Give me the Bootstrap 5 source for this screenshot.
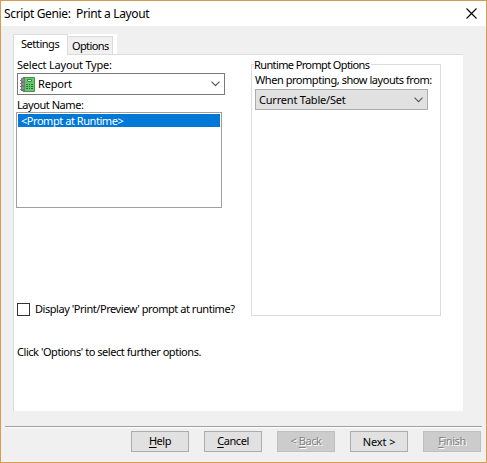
<!DOCTYPE html>
<html lang="en">
<head>
<meta charset="utf-8">
<title>Script Genie: Print a Layout</title>
<link href="https://cdn.jsdelivr.net/npm/bootstrap@5.3.0/dist/css/bootstrap.min.css" rel="stylesheet">
<style>
body{font:11px/16px "Noto Sans","Open Sans",sans-serif;color:#000;letter-spacing:-.45px}
.dialog{width:487px;height:463px;border:1px solid #d79b52;background:#f0f0f0;white-space:nowrap}
.dialog svg{flex:none}
.titlebar{height:25px;background:#fff;padding:0 5px 0 3px}
.caption{font-size:12px;letter-spacing:-.36px;white-space:pre}
.tabs{height:20px;margin:8px 0 0 12px;width:104px;background:#fff}
.tab-item{border:1px solid #dcdcdc}
.tab-on{width:55px;height:21px;background:#fff;border-bottom:0;padding:1px 0 0 7px}
.tab-off{width:45px;height:19px;margin-top:2px;background:#f0f0f0;border-left:0;padding:1px 0 0 4px}
.panel{width:450px;height:357px;margin-left:12px;background:linear-gradient(#dcdcdc,#dcdcdc) 54px 0/395px 1px no-repeat #fff;border-left:1px solid #dcdcdc;padding-left:2px}
.left-side{width:235px;padding-top:3px}
.field-label{padding-left:1px}
.names-label{height:17px;padding-top:2px}
.layout-type{width:208px;height:22px;border:1px solid #7a7a7a;padding:0 4px 0 2px;margin-left:1px}
.layout-type span{padding-left:3px}
.names{width:206px;height:96px;border:1px solid #a0a0a0;padding:1px}
.names .picked{height:13px;line-height:13px;background:#0078d7;color:#fff;padding-left:3px}
.check-row{margin-top:93px;padding-left:1px;gap:5px}
.check-square{width:13px;height:13px;border:1px solid #333;background:#fff;flex:none}
.hint{margin-top:27px}
.prompt-group{width:190px;height:252px;margin:10px 0 0;border:1px solid #dcdcdc;padding:0 0 0 3px}
.group-title{height:8px;margin-left:-1px}
.group-title span{background:#fff;margin-top:-8px;height:16px;padding-right:2px}
.show-from{margin-top:-1px;padding-bottom:1px}
.source{width:173px;height:21px;background:#e1e1e1;border:1px solid #adadad;padding:0 4px 0 3px}
.t-wide{letter-spacing:-.2px}
.t-tight{letter-spacing:-.62px}
.rule{height:2px;margin:15px 4px 0;background:#fff;border-top:1px solid #a0a0a0}
.actions{margin:3px 0 0 130px;gap:15px}
.push{width:58px;height:21px;border:1px solid #adadad;background:#e1e1e1;text-align:center;line-height:18px}
.push.off{background:#ccc;border-color:#bfbfbf;color:#838383;text-shadow:1px 1px #fff}
.push u{text-underline-offset:2px;text-decoration-thickness:1px}
.push-next{line-height:20px;letter-spacing:-.1px}
</style>
<script src="https://cdn.jsdelivr.net/npm/bootstrap@5.3.0/dist/js/bootstrap.bundle.min.js"></script>
</head>
<body class="overflow-hidden">
<main class="dialog">
<header class="titlebar d-flex align-items-center justify-content-between"><span class="caption">Script Genie:  Print a Layout</span><svg class="me-1" width="11" height="11" viewBox="0 0 11 11"><path d="M.5.5l10 10M10.5.5l-10 10" stroke="#000" stroke-width="1.1"/></svg></header>
<nav class="tabs d-flex"><div class="tab-item tab-on">Settings</div><div class="tab-item tab-off t-tight">Options</div></nav>
<section class="panel d-flex">
<div class="left-side">
<div class="field-label t-wide">Select Layout Type:</div>
<div class="layout-type d-flex align-items-center"><svg width="15" height="15" viewBox="0 0 15 15"><path d="M3 .5h11.5v14H3z" fill="#6cc56c" stroke="#3f9a50"/><path d="M1 1h4v13H1z" fill="#777"/><path d="M0 3.5h2M0 6.5h2M0 9.5h2M0 12.5h2" stroke="#777"/><path d="M3 2v2M3 6v2M3 10v2" stroke="#aaa"/><path d="M7.5 2.5h4v2h-4z" fill="#e5ffe5" stroke="#2f9440"/><path d="M6 7.5h2m1 0h1m1 0h2M6 9.5h2m1 0h1m1 0h2M6 11.5h2m1 0h1m1 0h2" stroke="#1b7d32"/></svg><span class="t-wide flex-fill">Report</span><svg width="9" height="6" viewBox="0 0 9 6"><path d="M.5 .7l4 4 4-4" fill="none" stroke="#555" stroke-width="1.1"/></svg></div>
<div class="field-label names-label">Layout Name:</div>
<div class="names"><div class="picked">&lt;Prompt at Runtime&gt;</div></div>
<div class="check-row d-flex align-items-center"><span class="check-square"></span><span>Display 'Print/Preview' prompt at runtime?</span></div>
<div class="field-label hint">Click 'Options' to select further options.</div>
</div>
<div class="prompt-group">
<div class="group-title d-flex"><span class="t-tight">Runtime Prompt Options</span></div>
<div class="show-from">When prompting, show layouts from:</div>
<div class="source d-flex align-items-center"><span class="t-wide flex-fill">Current Table/Set</span><svg width="9" height="6" viewBox="0 0 9 6"><path d="M.5 .7l4 4 4-4" fill="none" stroke="#555" stroke-width="1.1"/></svg></div>
</div>
</section>
<div class="rule"></div>
<footer class="actions d-flex"><div class="push"><u>H</u>elp</div><div class="push"><u>C</u>ancel</div><div class="push off">&lt; <u>B</u>ack</div><div class="push push-next">Next &gt;</div><div class="push off"><u>F</u>inish</div></footer>
</main>
</body>
</html>
